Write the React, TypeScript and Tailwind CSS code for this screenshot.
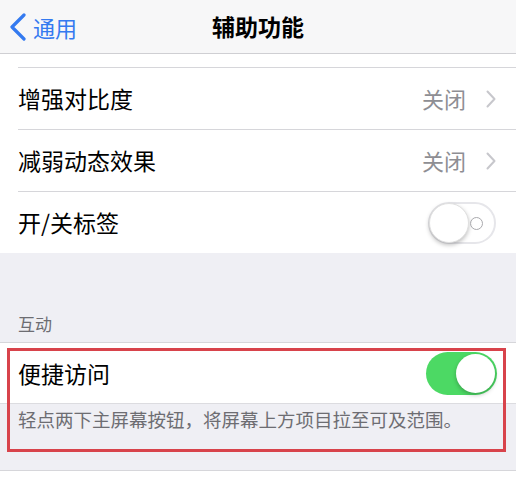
import React from 'react';

const font = { fontFamily: '"Noto Sans CJK SC", "Noto Sans", sans-serif' };

const Chevron = () => (
  <svg width="10" height="18" viewBox="0 0 10 18" className="ml-[20px]">
    <path d="M1.5 1.5 L8.5 9 L1.5 16.5" fill="none" stroke="#c7c7cc" strokeWidth="2" strokeLinecap="round" strokeLinejoin="round" />
  </svg>
);

const ToggleOff = () => (
  <div className="relative w-[68px] h-[42px] rounded-full border-2 border-[#e6e6ea] bg-white">
    <div className="absolute left-[-1px] top-[-1px] w-[40px] h-[40px] rounded-full bg-white shadow-[0_2px_4px_rgba(0,0,0,0.25)] border border-[#e0e0e0]" />
    <div className="absolute right-[11px] top-[13px] w-[13px] h-[13px] rounded-full border-[1.5px] border-[#a9a9ad]" />
  </div>
);

const ToggleOn = () => (
  <div className="relative w-[71px] h-[43px] rounded-full bg-[#4cd964]">
    <div className="absolute right-[2px] top-[2px] w-[39px] h-[39px] rounded-full bg-white shadow-[0_2px_4px_rgba(0,0,0,0.25)]" />
  </div>
);

const Row = ({ label, children }: { label: string; children: React.ReactNode }) => (
  <div className="pl-[18px]">
    <div className="h-[62px] flex items-center pr-[20px] border-t border-[#d6d6da]">
      <span className="flex-1 text-[23px] text-black">{label}</span>
      {children}
    </div>
  </div>
);

const Detail = ({ value }: { value: string }) => (
  <div className="flex items-center">
    <span className="text-[22px] text-[#8e8e93]">{value}</span>
    <Chevron />
  </div>
);

export default function App() {
  return (
    <div style={font} className="w-[516px] h-[477px] overflow-hidden bg-[#efeff4]">
      <header className="relative h-[54px] bg-[#f7f7f8] border-b border-[#cfcfd3] flex items-center">
        <div className="flex items-center pl-[9px] text-[#347af0]">
          <svg width="18" height="28" viewBox="0 0 18 28">
            <path d="M15 2 L3 14 L15 26" fill="none" stroke="#347af0" strokeWidth="3.2" strokeLinecap="round" strokeLinejoin="round" />
          </svg>
          <span className="ml-[6px] text-[22px] leading-none">通用</span>
        </div>
        <h1 className="absolute inset-x-0 text-center text-[23px] font-semibold text-black pointer-events-none">辅助功能</h1>
      </header>

      <div className="bg-white pt-[13px]">
        <Row label="增强对比度">
          <Detail value="关闭" />
        </Row>
        <Row label="减弱动态效果">
          <Detail value="关闭" />
        </Row>
        <Row label="开/关标签">
          <ToggleOff />
        </Row>
      </div>

      <div className="h-[89px] flex items-end pl-[18px] pb-[6px]">
        <span className="text-[17px] text-[#6d6d72]">互动</span>
      </div>

      <div className="relative">
        <div className="bg-white border-t border-[#d6d6da] h-[61px] flex items-center pl-[18px] pr-[19px]">
          <span className="flex-1 text-[23px] text-black">便捷访问</span>
          <ToggleOn />
        </div>
        <div className="h-[67px] border-t border-[#dcdce0] px-[18px] pt-[2px]">
          <p className="text-[18.5px] text-[#6d6d72]">轻点两下主屏幕按钮，将屏幕上方项目拉至可及范围。</p>
        </div>
        <div className="bg-white border-t border-[#d6d6da] h-[20px]" />
        <div className="absolute left-[7px] top-[6px] w-[499px] h-[104px] border-[3px] border-[#d8434b]" />
      </div>
    </div>
  );
}
